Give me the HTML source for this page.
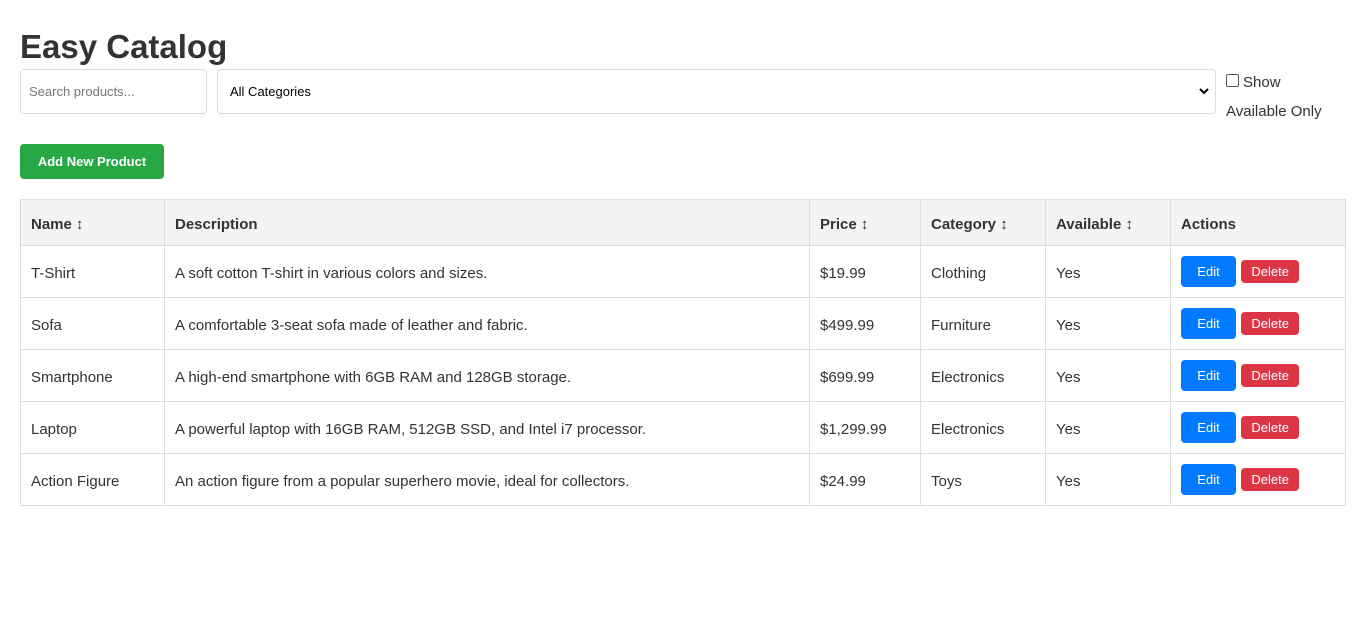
<!DOCTYPE html>
<html><head><style>
body{margin:0;font-family:"Liberation Sans",sans-serif;color:#333;background:#fff;}
h1{position:absolute;left:20px;top:27px;margin:0;font-size:33px;font-weight:bold;color:#333;line-height:40px;}
.search{position:absolute;left:20px;top:69px;width:187px;height:45px;border:1px solid #ddd;border-radius:4px;box-sizing:border-box;font-size:13px;color:#777;padding:14px 8px;}
.sel{position:absolute;left:217px;top:69px;width:999px;height:45px;border:1px solid #ddd;border-radius:4px;box-sizing:border-box;font-size:13px;color:#000;padding:14px 12px;}
.sel svg{position:absolute;right:6px;top:17px}
.chk{position:absolute;left:1226px;top:68px;font-size:15px;line-height:29px;color:#333;width:125px}
.chk i{display:inline-block;width:11px;height:11px;border:1px solid #555;border-radius:2px;margin-right:4px;vertical-align:0}
.add{position:absolute;left:20px;top:144px;width:144px;height:35px;background:#28a745;color:#fff;border-radius:4px;font-size:13px;font-weight:bold;text-align:center;line-height:35px}
table{position:absolute;left:20px;top:199px;border-collapse:collapse;width:1326px;font-size:15px;table-layout:fixed}
td,th{border:1px solid #ddd;padding:3px 10px 0;text-align:left;height:48px;color:#333;white-space:nowrap;overflow:hidden}
td:last-child{padding-top:0;height:51px}
th{height:42px;background:#f4f4f4;font-weight:bold}
.b{display:inline-block;color:#fff;font-size:13px;border-radius:4px;text-align:center;vertical-align:middle}
.e{background:#007bff;width:55px;height:31px;line-height:31px}
.d{background:#dc3545;width:58px;height:23px;line-height:23px;margin-left:1px}
.ar{font-weight:normal}
</style></head><body>
<h1>Easy Catalog</h1>
<div class="search">Search products...</div>
<div class="sel">All Categories<svg width="10" height="8" viewBox="0 0 10 8"><path d="M1 2l4 4 4-4" stroke="#000" stroke-width="2" fill="none"/></svg></div>
<div class="chk"><i></i>Show<br>Available Only</div>
<div class="add">Add New Product</div>
<table>
<colgroup><col style="width:144px"><col style="width:645px"><col style="width:111px"><col style="width:125px"><col style="width:125px"><col></colgroup>
<tr><th>Name <span class="ar">↕</span></th><th>Description</th><th>Price <span class="ar">↕</span></th><th>Category <span class="ar">↕</span></th><th>Available <span class="ar">↕</span></th><th>Actions</th></tr>
<tr><td>T-Shirt</td><td>A soft cotton T-shirt in various colors and sizes.</td><td>$19.99</td><td>Clothing</td><td>Yes</td><td><span class="b e">Edit</span> <span class="b d">Delete</span></td></tr>
<tr><td>Sofa</td><td>A comfortable 3-seat sofa made of leather and fabric.</td><td>$499.99</td><td>Furniture</td><td>Yes</td><td><span class="b e">Edit</span> <span class="b d">Delete</span></td></tr>
<tr><td>Smartphone</td><td>A high-end smartphone with 6GB RAM and 128GB storage.</td><td>$699.99</td><td>Electronics</td><td>Yes</td><td><span class="b e">Edit</span> <span class="b d">Delete</span></td></tr>
<tr><td>Laptop</td><td>A powerful laptop with 16GB RAM, 512GB SSD, and Intel i7 processor.</td><td>$1,299.99</td><td>Electronics</td><td>Yes</td><td><span class="b e">Edit</span> <span class="b d">Delete</span></td></tr>
<tr><td>Action Figure</td><td>An action figure from a popular superhero movie, ideal for collectors.</td><td>$24.99</td><td>Toys</td><td>Yes</td><td><span class="b e">Edit</span> <span class="b d">Delete</span></td></tr>
</table>
</body></html>
